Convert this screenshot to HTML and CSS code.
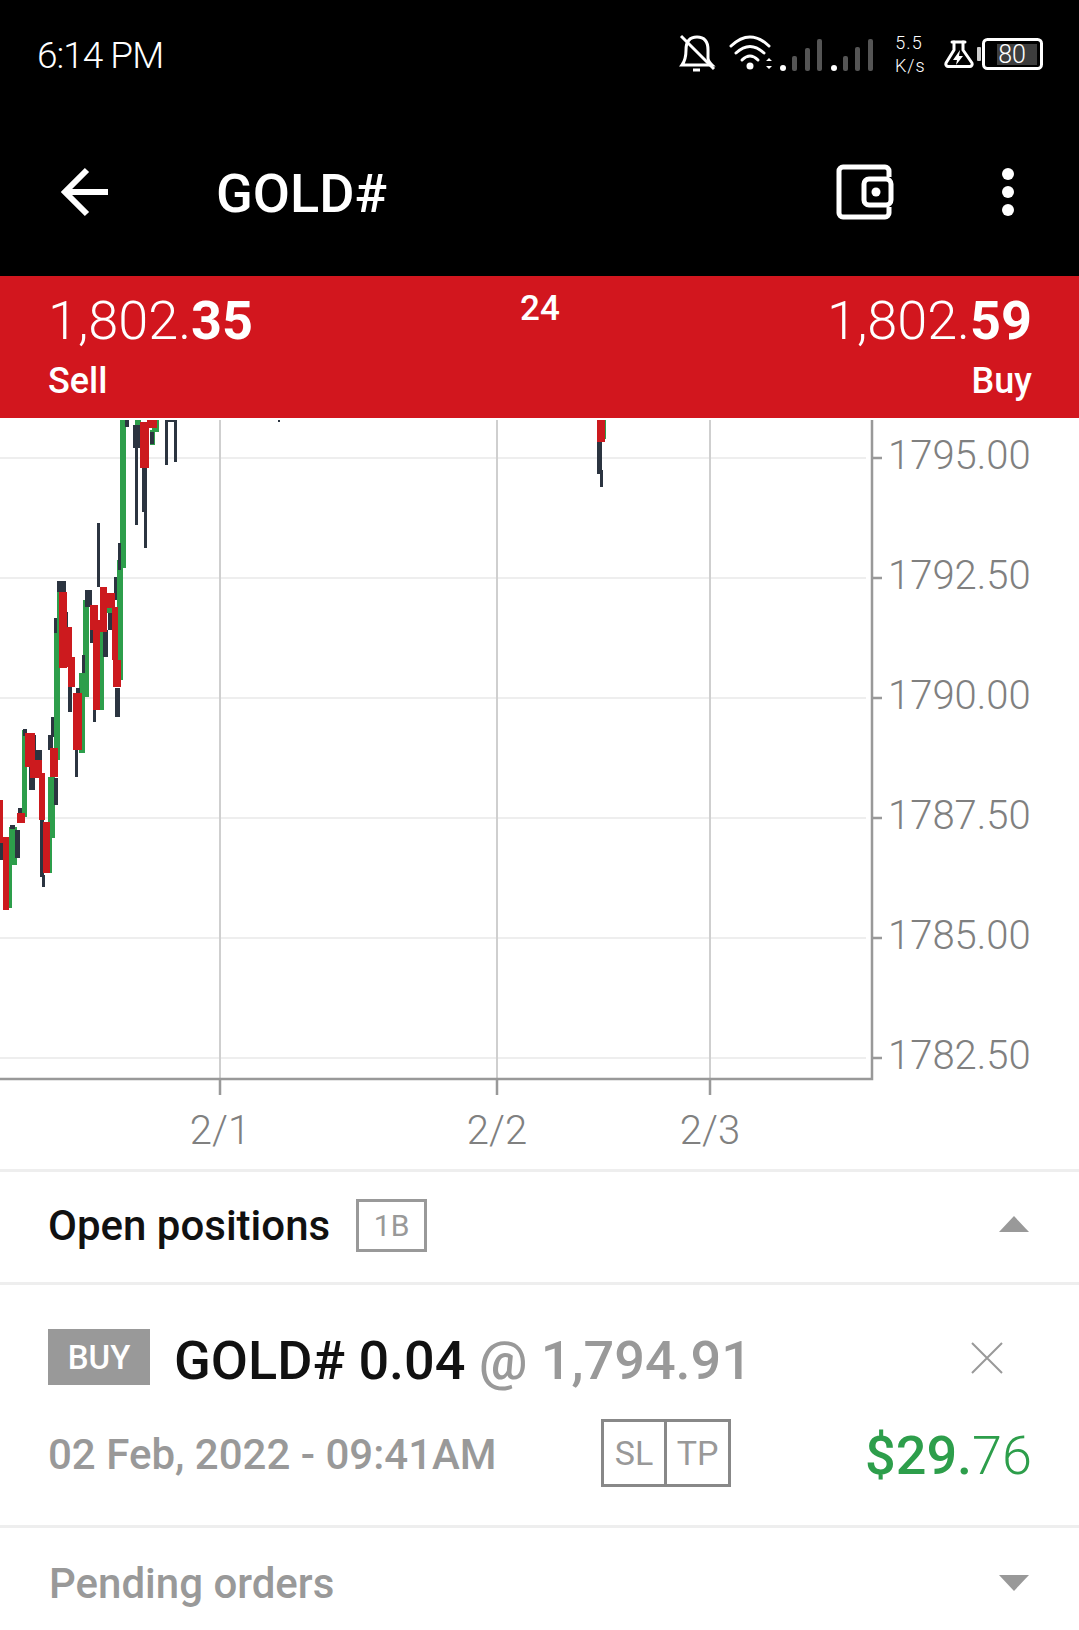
FILE: index.html
```html
<!DOCTYPE html>
<html lang="en">
<head>
    <meta charset="UTF-8">
    <meta name="viewport" content="width=device-width, initial-scale=1.0">
    <title>GOLD#</title>
    <link rel="stylesheet" href="styles.css">
</head>
<body>
    <header class="top">
        <div class="status">
            <span class="time">6:14 PM</span>
            <div class="status-icons">
                <svg class="icon-net" viewBox="676 30 200 48">
                    <!-- muted bell -->
                    <g class="line">
                        <path d="M681 65 C684 61 685 56 685 50 C685 41 689 37 696 37 C703 37 707 41 707 50 V58 C707 61 709 63 711 65 Z"/>
                        <path d="M680 36 L713 69"/>
                        <path d="M692 70 h7"/>
                    </g>
                    <!-- wifi -->
                    <g class="line round">
                        <path d="M741 60 Q749 52 757 60"/>
                        <path d="M735 53 Q749 40 763 53"/>
                        <path d="M730 46 Q749 28 768 46"/>
                    </g>
                    <circle class="solid" cx="749" cy="66" r="3.5"/>
                    <path class="solid" d="M768 58 l-3 3 h6 Z M768 69 l-3 -3 h6 Z"/>
                    <!-- signal -->
                    <circle class="solid" cx="782" cy="68" r="3"/>
                    <rect class="bar" x="791" y="56" width="5" height="15" rx="2"/>
                    <rect class="bar" x="804" y="48" width="5" height="23" rx="2"/>
                    <rect class="bar" x="816" y="39" width="5" height="32" rx="2"/>
                    <circle class="solid" cx="833" cy="68" r="3"/>
                    <rect class="bar" x="842" y="56" width="5" height="15" rx="2"/>
                    <rect class="bar" x="854" y="47" width="5" height="24" rx="2"/>
                    <rect class="bar" x="867" y="39" width="5" height="32" rx="2"/>
                </svg>
                <div class="speed"><span>5.5</span><span>K/s</span></div>
                <svg class="icon-batt" viewBox="943 34 102 40">
                    <!-- flask -->
                    <g class="line round">
                        <path d="M952 42 h13"/>
                        <path d="M954 42 v8 L946 63 a2.5 2.5 0 0 0 2 3.5 h22 a2.5 2.5 0 0 0 2 -3.5 L963 50 V42"/>
                    </g>
                    <path class="solid" d="M960 50 L953 60 h4 l-1 5 L963 56 h-4 Z"/>
                    <!-- battery -->
                    <rect class="nub" x="977" y="47" width="4" height="14" rx="1"/>
                    <rect class="line" x="983.5" y="39.5" width="58" height="29" rx="4"/>
                    <rect class="batt-fill" x="997" y="44" width="40" height="21"/>
                    <text class="batt-text" x="1012" y="63">80</text>
                </svg>
            </div>
        </div>
        <div class="appbar">
            <svg class="icon-back" viewBox="56 166 52 52">
                <path d="M105 192 H62 M84 170 L62 192 L84 214"/>
            </svg>
            <h1 class="title">GOLD#</h1>
            <svg class="icon-wallet" viewBox="835 162 60 60">
                <path class="wallet" d="M889 177 V171 a4 4 0 0 0 -4 -4 H843 a4 4 0 0 0 -4 4 V213 a4 4 0 0 0 4 4 H885 a4 4 0 0 0 4 -4 V207"/>
                <rect class="wallet" x="864" y="179" width="27" height="26" rx="5"/>
                <circle class="solid" cx="876" cy="192" r="4.5"/>
            </svg>
            <svg class="icon-more" viewBox="0 0 14 50">
                <circle class="solid" cx="7" cy="7" r="6"/>
                <circle class="solid" cx="7" cy="25" r="6"/>
                <circle class="solid" cx="7" cy="43" r="6"/>
            </svg>
        </div>
    </header>

    <section class="quote">
        <div class="quote-side">
            <div class="price">1,802.<b>35</b></div>
            <div class="side-label">Sell</div>
        </div>
        <div class="spread">24</div>
        <div class="quote-side right">
            <div class="price">1,802.<b>59</b></div>
            <div class="side-label">Buy</div>
        </div>
    </section>

    <svg class="chart" viewBox="0 418 1079 751">
        <g class="grid-h">
            <path d="M0 458 H866"/>
            <path d="M0 578 H866"/>
            <path d="M0 698 H866"/>
            <path d="M0 818 H866"/>
            <path d="M0 938 H866"/>
            <path d="M0 1058 H866"/>
        </g>
        <g class="grid-v">
            <path d="M220 420 V1079"/>
            <path d="M497 420 V1079"/>
            <path d="M710 420 V1079"/>
        </g>
        <g class="axis">
            <path d="M872 420 V1079 H0"/>
            <path d="M872 458 h10 M872 578 h10 M872 698 h10 M872 818 h10 M872 938 h10 M872 1058 h10"/>
            <path d="M220 1079 v16 M497 1079 v16 M710 1079 v16"/>
        </g>

        <g class="candles">
            <g class="c-green">
                <rect x="120" y="420" width="6" height="148"/>
                <rect x="117" y="560" width="6" height="120"/>
                <rect x="54" y="620" width="6" height="140"/>
                <rect x="57" y="582" width="3" height="40"/>
                <rect x="83" y="600" width="6" height="97"/>
                <rect x="79" y="673" width="6" height="80"/>
                <rect x="100" y="620" width="4" height="90"/>
                <rect x="105" y="605" width="7" height="8"/>
                <rect x="80" y="700" width="4" height="52"/>
                <rect x="22" y="730" width="5" height="87"/>
                <rect x="9" y="827" width="8" height="38"/>
                <rect x="8" y="847" width="4" height="61"/>
                <rect x="48" y="777" width="7" height="61"/>
                <rect x="48" y="820" width="4" height="53"/>
                <rect x="152" y="420" width="7" height="12"/>
                <rect x="150" y="430" width="5" height="15"/>
                <rect x="135" y="420" width="6" height="5"/>
                <rect x="603" y="420" width="3" height="19"/>
            </g>
            <g class="c-dark">
                <rect x="278" y="420" width="2" height="2"/>
                <rect x="125" y="420" width="4" height="7"/>
                <rect x="133" y="425" width="9" height="23"/>
                <rect x="135" y="448" width="3" height="77"/>
                <rect x="142" y="467" width="5" height="45"/>
                <rect x="144" y="512" width="3" height="36"/>
                <rect x="150" y="432" width="4" height="12"/>
                <rect x="165" y="420" width="3" height="45"/>
                <rect x="174" y="420" width="3" height="42"/>
                <rect x="165" y="420" width="12" height="2"/>
                <rect x="118" y="543" width="3" height="27"/>
                <rect x="97" y="523" width="3" height="64"/>
                <rect x="57" y="581" width="9" height="11"/>
                <rect x="54" y="618" width="3" height="15"/>
                <rect x="65" y="612" width="3" height="15"/>
                <rect x="85" y="590" width="7" height="17"/>
                <rect x="90" y="627" width="3" height="16"/>
                <rect x="82" y="655" width="3" height="18"/>
                <rect x="103" y="630" width="5" height="27"/>
                <rect x="108" y="613" width="4" height="17"/>
                <rect x="114" y="577" width="3" height="23"/>
                <rect x="115" y="688" width="5" height="29"/>
                <rect x="68" y="685" width="4" height="27"/>
                <rect x="93" y="710" width="3" height="12"/>
                <rect x="76" y="688" width="4" height="9"/>
                <rect x="23" y="729" width="4" height="7"/>
                <rect x="33" y="735" width="3" height="16"/>
                <rect x="33" y="750" width="9" height="12"/>
                <rect x="29" y="767" width="6" height="23"/>
                <rect x="48" y="735" width="5" height="15"/>
                <rect x="51" y="717" width="3" height="20"/>
                <rect x="54" y="778" width="4" height="27"/>
                <rect x="15" y="830" width="5" height="28"/>
                <rect x="18" y="808" width="4" height="8"/>
                <rect x="10" y="825" width="5" height="4"/>
                <rect x="0" y="843" width="4" height="17"/>
                <rect x="40" y="820" width="4" height="57"/>
                <rect x="42" y="875" width="3" height="12"/>
                <rect x="75" y="750" width="3" height="27"/>
                <rect x="597" y="442" width="5" height="32"/>
                <rect x="600" y="470" width="3" height="17"/>
            </g>
            <g class="c-red">
                <rect x="140" y="422" width="9" height="46"/>
                <rect x="147" y="420" width="10" height="8"/>
                <rect x="59" y="592" width="8" height="76"/>
                <rect x="65" y="627" width="7" height="40"/>
                <rect x="68" y="657" width="7" height="30"/>
                <rect x="73" y="693" width="9" height="57"/>
                <rect x="90" y="605" width="8" height="25"/>
                <rect x="93" y="620" width="7" height="90"/>
                <rect x="100" y="587" width="7" height="45"/>
                <rect x="105" y="593" width="10" height="15"/>
                <rect x="112" y="607" width="6" height="53"/>
                <rect x="113" y="660" width="8" height="27"/>
                <rect x="0" y="800" width="3" height="43"/>
                <rect x="3" y="837" width="6" height="73"/>
                <rect x="25" y="733" width="10" height="34"/>
                <rect x="30" y="760" width="12" height="18"/>
                <rect x="39" y="773" width="6" height="47"/>
                <rect x="43" y="822" width="7" height="51"/>
                <rect x="50" y="748" width="8" height="29"/>
                <rect x="17" y="813" width="8" height="10"/>
                <rect x="597" y="420" width="8" height="22"/>
            </g>
        </g>

        <g class="axis-label">
            <text x="888" y="469">1795.00</text>
            <text x="888" y="589">1792.50</text>
            <text x="888" y="709">1790.00</text>
            <text x="888" y="829">1787.50</text>
            <text x="888" y="949">1785.00</text>
            <text x="888" y="1069">1782.50</text>
        </g>
        <g class="axis-label mid">
            <text x="220" y="1144">2/1</text>
            <text x="497" y="1144">2/2</text>
            <text x="710" y="1144">2/3</text>
        </g>
    </svg>

    <section class="panel-head">
        <span class="panel-title">Open positions</span>
        <span class="count">1B</span>
        <span class="caret up"></span>
    </section>

    <section class="position">
        <div class="pos-top">
            <span class="buy">BUY</span>
            <span class="symbol">GOLD# 0.04 <span class="at">@ 1,794.91</span></span>
            <svg class="icon-close" viewBox="0 0 32 32">
                <path d="M1 1 L31 31 M31 1 L1 31"/>
            </svg>
        </div>
        <div class="pos-bottom">
            <span class="date">02 Feb, 2022 - 09:41AM</span>
            <div class="sl-tp">
                <span>SL</span>
                <span>TP</span>
            </div>
            <span class="profit">$29.<span class="cents">76</span></span>
        </div>
    </section>

    <section class="panel-head pending">
        <span class="panel-title">Pending orders</span>
        <span class="caret down"></span>
    </section>
</body>
</html>
```

FILE: styles.css
```css
body {
    font-family: Roboto, "Liberation Sans", sans-serif;
    margin: 0;
    padding: 0;
    width: 1079px;
    height: 1630px;
    overflow: hidden;
    background-color: #fff;
    color: #111;
}

svg {
    display: block;
    flex: none;
}

.top {
    background-color: #000;
    color: #fff;
}

.status {
    height: 108px;
    padding: 0 34px 0 37px;
    display: flex;
    align-items: center;
}

.time {
    font-size: 37px;
    font-weight: 300;
    letter-spacing: -1px;
    margin-top: 2px;
}

.status-icons {
    margin-left: auto;
    display: flex;
    align-items: center;
}

.icon-net {
    width: 200px;
    height: 48px;
}

.icon-batt {
    width: 102px;
    height: 40px;
    margin-left: 20px;
}

.line {
    fill: none;
    stroke: #fff;
    stroke-width: 3;
}

.round {
    stroke-linecap: round;
    stroke-linejoin: round;
}

.solid {
    fill: #fff;
}

.bar {
    fill: #555;
}

.nub {
    fill: #ccc;
}

.batt-fill {
    fill: #3d3d3d;
}

.batt-text {
    fill: #fff;
    font-size: 25px;
    font-weight: 300;
    text-anchor: middle;
}

.speed {
    width: 28px;
    margin-left: 18px;
    display: flex;
    flex-direction: column;
    gap: 5px;
    font-size: 18px;
    line-height: 18px;
    font-weight: 300;
    text-align: center;
    letter-spacing: 1px;
}

.appbar {
    height: 168px;
    padding: 0 64px 0 59px;
    display: flex;
    align-items: center;
}

.icon-back {
    width: 52px;
    height: 52px;
}

.icon-back path {
    fill: none;
    stroke: #fff;
    stroke-width: 6;
}

.title {
    margin: 3px 0 0 105px;
    font-size: 54px;
    font-weight: 500;
}

.icon-wallet {
    width: 60px;
    height: 60px;
    margin-left: auto;
}

.wallet {
    fill: none;
    stroke: #fff;
    stroke-width: 5;
}

.icon-more {
    width: 14px;
    height: 50px;
    margin-left: 106px;
}

.quote {
    height: 142px;
    box-sizing: border-box;
    padding: 15px 47px 18px 48px;
    background-color: #d2161e;
    color: #fff;
    display: grid;
    grid-template-columns: 1fr auto 1fr;
}

.price {
    font-size: 54px;
    line-height: 60px;
    font-weight: 300;
}

.price b {
    font-weight: 700;
}

.side-label {
    margin-top: 10px;
    font-size: 36px;
    line-height: 40px;
    font-weight: 500;
}

.right {
    text-align: right;
}

.spread {
    font-size: 35px;
    line-height: 40px;
    font-weight: 500;
    margin-top: -2px;
}

.chart {
    width: 1079px;
    height: 751px;
}

.grid-h path {
    fill: none;
    stroke: #eee;
    stroke-width: 2;
}

.grid-v path {
    fill: none;
    stroke: #cfcfcf;
    stroke-width: 2;
}

.axis path {
    fill: none;
    stroke: #999;
    stroke-width: 2.5;
}

.candles {
    filter: blur(0.7px);
}

.c-dark {
    fill: #2b3440;
}

.c-green {
    fill: #2d9e4b;
}

.c-red {
    fill: #cc1a1e;
}

.axis-label {
    font-size: 40px;
    font-weight: 300;
    fill: #808080;
}

.mid {
    text-anchor: middle;
}

.panel-head {
    height: 113px;
    box-sizing: border-box;
    padding: 0 50px 3px 48px;
    border-top: 3px solid #eee;
    display: flex;
    align-items: center;
}

.panel-title {
    font-size: 42px;
    font-weight: 500;
}

.count {
    width: 71px;
    height: 53px;
    box-sizing: border-box;
    margin-left: 26px;
    border: 3px solid #999;
    color: #999;
    font-size: 30px;
    display: flex;
    align-items: center;
    justify-content: center;
}

.caret {
    margin-left: auto;
    width: 0;
    height: 0;
    border-left: 15px solid transparent;
    border-right: 15px solid transparent;
}

.caret.up {
    border-bottom: 16px solid #999;
    margin-bottom: 3px;
}

.caret.down {
    border-top: 16px solid #999;
}

.position {
    height: 243px;
    box-sizing: border-box;
    padding: 44px 47px 0 48px;
    border-top: 3px solid #eee;
}

.pos-top {
    height: 56px;
    display: flex;
    align-items: center;
}

.buy {
    width: 102px;
    height: 56px;
    background-color: #999;
    color: #fff;
    font-size: 33px;
    font-weight: 500;
    display: flex;
    align-items: center;
    justify-content: center;
}

.symbol {
    margin: 6px 0 0 24px;
    font-size: 54px;
    font-weight: 500;
}

.at {
    color: #999;
}

.icon-close {
    width: 32px;
    height: 32px;
    margin: 2px 29px 0 auto;
}

.icon-close path {
    fill: none;
    stroke: #999;
    stroke-width: 2;
}

.pos-bottom {
    margin-top: 34px;
    height: 68px;
    display: grid;
    grid-template-columns: 553px auto 1fr;
    align-items: center;
}

.date {
    font-size: 42px;
    font-weight: 500;
    color: #999;
    margin-top: 3px;
}

.sl-tp {
    width: 130px;
    height: 68px;
    box-sizing: border-box;
    border: 3px solid #888;
    display: grid;
    grid-template-columns: 60px 1fr;
    color: #999;
    font-size: 34px;
}

.sl-tp span {
    display: flex;
    align-items: center;
    justify-content: center;
}

.sl-tp span + span {
    border-left: 3px solid #888;
}

.profit {
    text-align: right;
    font-size: 54px;
    font-weight: 500;
    color: #2d9e4b;
    margin-top: 4px;
}

.cents {
    font-weight: 300;
}

.pending {
    color: #999;
    height: 105px;
    padding-top: 8px;
    padding-bottom: 0;
}

.pending .panel-title {
    margin-left: 1px;
}
```
